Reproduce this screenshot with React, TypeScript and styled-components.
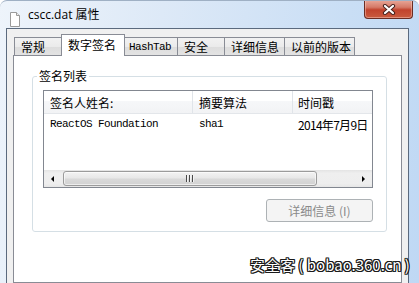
import styled, { createGlobalStyle } from "styled-components";

const GlobalStyle = createGlobalStyle`
  html, body {
    margin: 0;
    padding: 0;
  }
  body {
    background: #ffffff;
    font-family: "Noto Sans CJK SC", "Noto Sans", sans-serif;
  }
`;

const tabs = [
  { label: "常规", width: 48 },
  { label: "数字签名", width: 64, active: true },
  { label: "HashTab", width: 54, mono: true },
  { label: "安全", width: 48 },
  { label: "详细信息", width: 61 },
  { label: "以前的版本", width: 71 },
];

const DocIcon = () => (
  <svg width="12" height="15" viewBox="0 0 12 15">
    <path d="M1.5 0.5 H7.5 L10.5 3.5 V14.5 H1.5 Z" fill="#ffffff" stroke="#9a9a9a" />
    <path d="M7.5 0.5 V3.5 H10.5" fill="#ececec" stroke="#9a9a9a" />
  </svg>
);

const CloseGlyph = () => (
  <svg width="14" height="11" viewBox="0 0 14 11">
    <path d="M3 2 L11 9 M11 2 L3 9" stroke="#4a2420" strokeWidth="4.2" strokeLinecap="round" />
    <path d="M3 2 L11 9 M11 2 L3 9" stroke="#ffffff" strokeWidth="2.2" strokeLinecap="round" />
  </svg>
);

const App = () => {
  return (
    <>
      <GlobalStyle />
      <Window>
        <TitleBar>
          <IconSlot>
            <DocIcon />
          </IconSlot>
          <Title>cscc.dat 属性</Title>
          <CloseButton>
            <CloseGlyph />
          </CloseButton>
        </TitleBar>

        <Client>
          <TabStrip>
            {tabs.map((tab) => (
              <Tab key={tab.label} $w={tab.width} $active={tab.active} $mono={tab.mono}>
                {tab.label}
              </Tab>
            ))}
          </TabStrip>

          <Panel>
            <Group>
              <Legend>签名列表</Legend>
              <GroupBody>
                <ListView>
                  <HeaderRow>
                    <HeaderCell $w={149}>签名人姓名:</HeaderCell>
                    <HeaderCell $w={100}>摘要算法</HeaderCell>
                    <HeaderCell $pad={5}>时间戳</HeaderCell>
                  </HeaderRow>
                  <ListBody>
                    <Row>
                      <Cell $w={149} $mono>ReactOS Foundation</Cell>
                      <Cell $w={100} $mono>sha1</Cell>
                      <Cell $pad={5} $tight>2014年7月9日</Cell>
                    </Row>
                  </ListBody>
                  <ScrollBar>
                    <ArrowButton>
                      <ArrowLeft />
                    </ArrowButton>
                    <Thumb>
                      <Grip />
                      <Grip />
                      <Grip />
                    </Thumb>
                    <Track />
                    <ArrowButton>
                      <ArrowRight />
                    </ArrowButton>
                  </ScrollBar>
                </ListView>
                <ButtonRow>
                  <DetailButton disabled>详细信息 (I)</DetailButton>
                </ButtonRow>
              </GroupBody>
            </Group>
          </Panel>
        </Client>

        <Watermark>安全客 ( bobao.360.cn )</Watermark>
      </Window>
    </>
  );
};

const Window = styled.div`
  position: relative;
  width: 419px;
  height: 283px;
  box-sizing: border-box;
  overflow: hidden;
  display: flex;
  flex-direction: column;
  border-top: 1px solid #9fb0c4;
  border-radius: 7px 7px 0 0;
  background: linear-gradient(100deg, #eef4fb 0%, #dde9f7 35%, #c9def5 75%, #bfd8f4 100%);
`;

const TitleBar = styled.div`
  display: flex;
  align-items: flex-start;
  height: 27px;
  flex-shrink: 0;
`;

const IconSlot = styled.div`
  margin: 7px 0 0 9px;
  width: 12px;
  height: 15px;
`;

const Title = styled.div`
  margin: 5px 0 0 7px;
  font-family: "Open Sans", "Noto Sans CJK SC", sans-serif;
  font-size: 12px;
  line-height: 18px;
  color: #000000;
`;

const CloseButton = styled.div`
  margin-left: auto;
  margin-right: 6px;
  margin-top: -1px;
  width: 49px;
  height: 19px;
  box-sizing: border-box;
  display: flex;
  align-items: center;
  justify-content: center;
  border: 1px solid #6a2d24;
  border-top: none;
  border-radius: 0 0 4px 4px;
  background: linear-gradient(180deg, #e9a99a 0%, #d57a68 40%, #c1432d 55%, #c95b3f 100%);
  box-shadow: inset 0 0 0 1px rgba(255, 210, 200, 0.45);
`;

const Client = styled.div`
  flex: 1;
  display: flex;
  flex-direction: column;
  margin: 0 10px 0 6px;
  padding: 5px 6px 0 6px;
  border: 1px solid #5b6a7e;
  border-bottom: none;
  background: #f0f0f0;
`;

const TabStrip = styled.div`
  position: relative;
  z-index: 1;
  display: flex;
  align-items: flex-end;
  height: 21px;
  padding-left: 1px;
`;

const Tab = styled.div<{ $w: number; $active?: boolean; $mono?: boolean }>`
  position: relative;
  width: ${(p) => p.$w}px;
  height: ${(p) => (p.$active ? 22 : 18)}px;
  margin-left: -1px;
  margin-bottom: ${(p) => (p.$active ? -1 : 0)}px;
  z-index: ${(p) => (p.$active ? 2 : 1)};
  box-sizing: border-box;
  display: flex;
  align-items: center;
  padding-left: ${(p) => (p.$mono ? 4 : 6)}px;
  padding-bottom: ${(p) => (p.$active ? 2 : 0)}px;
  border: 1px solid #898c95;
  border-bottom: none;
  background: ${(p) =>
    p.$active ? "#ffffff" : "linear-gradient(180deg, #f2f2f2 0%, #ebebeb 50%, #dddddd 51%, #e3e3e3 100%)"};
  font-family: ${(p) =>
    p.$mono ? '"Liberation Mono", monospace' : '"Noto Sans CJK SC", sans-serif'};
  font-size: ${(p) => (p.$mono ? 11 : 12)}px;
  letter-spacing: ${(p) => (p.$mono ? "-0.6px" : "0")};
  color: #000000;
  white-space: nowrap;

  &:first-child {
    margin-left: 0;
  }
`;

const Panel = styled.div`
  flex: 1;
  padding: 12px 14px 0 18px;
  border: 1px solid #898c95;
  background: #ffffff;
`;

const Group = styled.fieldset`
  margin: 0;
  padding: 0;
  border: 1px solid #d5dfe5;
  border-radius: 3px;
  min-width: 0;
`;

const Legend = styled.legend`
  margin-left: 4px;
  padding: 0 2px;
  font-size: 12px;
  line-height: 16px;
  color: #000000;
`;

const GroupBody = styled.div`
  padding: 6px 13px 9px 10px;
`;

const ListView = styled.div`
  height: 98px;
  box-sizing: border-box;
  display: flex;
  flex-direction: column;
  border: 1px solid #828790;
  background: #ffffff;
  overflow: hidden;
`;

const HeaderRow = styled.div`
  display: flex;
  height: 23px;
  flex-shrink: 0;
  box-sizing: border-box;
  border-bottom: 1px solid #e3e6ea;
  background: linear-gradient(180deg, #ffffff 0%, #ffffff 45%, #f6f7f9 46%, #f2f3f5 100%);
`;

const HeaderCell = styled.div<{ $w?: number; $pad?: number }>`
  ${(p) => (p.$w ? `width: ${p.$w}px; border-right: 1px solid #e0e4e9;` : "flex: 1;")}
  box-sizing: border-box;
  flex-shrink: 0;
  padding: 2px 0 0 ${(p) => p.$pad ?? 6}px;
  font-size: 12px;
  line-height: 20px;
  color: #000000;
  white-space: nowrap;
`;

const ListBody = styled.div`
  flex: 1;
  padding-top: 2px;
`;

const Row = styled.div`
  display: flex;
  height: 17px;
  align-items: center;
`;

const Cell = styled.div<{ $w?: number; $pad?: number; $mono?: boolean; $tight?: boolean }>`
  ${(p) => (p.$w ? `width: ${p.$w}px;` : "flex: 1;")}
  box-sizing: border-box;
  flex-shrink: 0;
  padding-left: ${(p) => p.$pad ?? 6}px;
  font-family: ${(p) =>
    p.$mono ? '"Liberation Mono", monospace' : '"Noto Sans CJK SC", sans-serif'};
  font-size: ${(p) => (p.$mono ? 11 : 12)}px;
  letter-spacing: ${(p) => (p.$mono ? "-0.6px" : p.$tight ? "-0.7px" : "0")};
  line-height: 17px;
  color: #000000;
  white-space: nowrap;
`;

const ScrollBar = styled.div`
  display: flex;
  align-items: center;
  height: 17px;
  flex-shrink: 0;
  background: linear-gradient(180deg, #e4e4e4 0%, #efefef 20%, #eeeeee 80%, #e6e6e6 100%);
`;

const ArrowButton = styled.div`
  width: 17px;
  height: 17px;
  display: flex;
  align-items: center;
  justify-content: center;
  flex-shrink: 0;
`;

const ArrowLeft = styled.div`
  width: 0;
  height: 0;
  border-top: 3px solid transparent;
  border-bottom: 3px solid transparent;
  border-right: 3px solid #000000;
`;

const ArrowRight = styled.div`
  width: 0;
  height: 0;
  border-top: 3px solid transparent;
  border-bottom: 3px solid transparent;
  border-left: 3px solid #000000;
`;

const Thumb = styled.div`
  width: 254px;
  height: 15px;
  margin-left: 2px;
  box-sizing: border-box;
  display: flex;
  align-items: center;
  justify-content: center;
  gap: 1px;
  border: 1px solid #9b9b9b;
  border-radius: 3px;
  background: linear-gradient(180deg, #f3f3f3 0%, #e8e8e8 45%, #d9d9d9 55%, #d2d2d2 100%);
  box-shadow: inset 0 0 0 1px rgba(255, 255, 255, 0.6);
`;

const Grip = styled.div`
  width: 1px;
  height: 7px;
  background: #4a4a4a;
  box-shadow: 1px 0 0 #f4f4f4;
  margin-right: 1px;
`;

const Track = styled.div`
  flex: 1;
`;

const ButtonRow = styled.div`
  display: flex;
  justify-content: flex-end;
  margin-top: 11px;
`;

const DetailButton = styled.button`
  width: 107px;
  height: 23px;
  padding: 0;
  box-sizing: border-box;
  border: 1px solid #adb2b5;
  border-radius: 3px;
  background: #f4f4f4;
  color: #8a8a8a;
  font-family: "Noto Sans CJK SC", sans-serif;
  font-size: 12px;
  line-height: 20px;
`;

const Watermark = styled.div`
  position: absolute;
  left: 250px;
  top: 255px;
  font-family: "Noto Sans CJK SC", sans-serif;
  font-size: 15px;
  line-height: 18px;
  color: #ffffff;
  white-space: nowrap;
  text-shadow:
    1px 0 0 #1a1a1a,
    -1px 0 0 #1a1a1a,
    0 1px 0 #1a1a1a,
    0 -1px 0 #1a1a1a,
    1px 1px 0 #1a1a1a,
    -1px -1px 0 #1a1a1a,
    1px -1px 0 #1a1a1a,
    -1px 1px 0 #1a1a1a;
`;

export default App;
